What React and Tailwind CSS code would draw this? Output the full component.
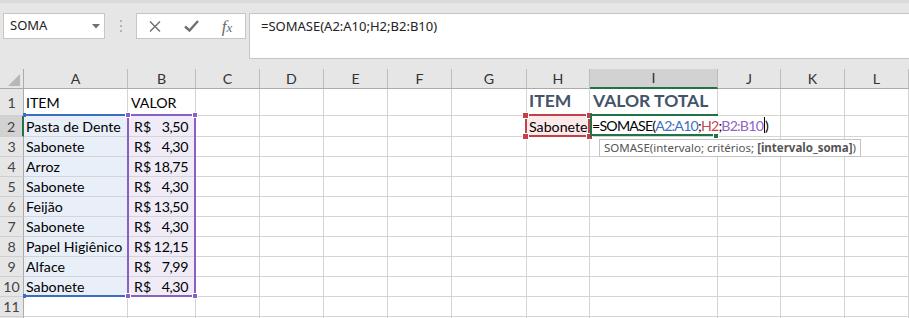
import React from "react";

const COLS = ["A", "B", "C", "D", "E", "F", "G", "H", "I", "J", "K", "L"];
const ITEMS = ["Pasta de Dente", "Sabonete", "Arroz", "Sabonete", "Feijão", "Sabonete", "Papel Higiênico", "Alface", "Sabonete"];
const VALUES = ["3,50", "4,30", "18,75", "4,30", "13,50", "4,30", "12,15", "7,99", "4,30"];
const ROWS = [1, 2, 3, 4, 5, 6, 7, 8, 9, 10, 11, 12];

function Toolbar() {
  return (
    <div className="h-[69px] border-t-[3px] border-t-[#dadada] pt-[10px] flex items-start">
      <div className="ml-[3px] w-[102px] h-[26px] bg-white border border-[#c6c6c6] flex items-center justify-between pl-[6px] pr-[4px] font-['Noto_Sans',sans-serif] text-[13px] text-[#222]">
        <span>SOMA</span>
        <svg width="8" height="5" viewBox="0 0 8 5">
          <polygon points="0,0 8,0 4,4.5" fill="#707070" />
        </svg>
      </div>
      <div className="w-[31px] h-[26px] flex flex-col items-center justify-center gap-[3px]">
        <div className="w-[2px] h-[2px] bg-[#b3b3b3]" />
        <div className="w-[2px] h-[2px] bg-[#b3b3b3]" />
        <div className="w-[2px] h-[2px] bg-[#b3b3b3]" />
      </div>
      <div className="w-[110px] h-[26px] bg-white border border-[#c6c6c6] flex">
        <div className="w-[36px] h-full flex items-center justify-center">
          <svg width="12" height="11" viewBox="0 0 12 11">
            <path d="M1 0.5 L11 10.5 M11 0.5 L1 10.5" stroke="#6e6e6e" strokeWidth="1.4" fill="none" />
          </svg>
        </div>
        <div className="w-[36px] h-full flex items-center justify-center">
          <svg width="15" height="12" viewBox="0 0 15 12">
            <path d="M1 6.5 L5.5 10.5 L14 1" stroke="#707070" strokeWidth="2.4" fill="none" />
          </svg>
        </div>
        <div className="w-[36px] h-full flex items-center justify-center font-['Liberation_Serif',serif] italic text-[#6a6a6a] text-[17px] leading-none">
          <span>f</span>
          <span className="text-[13px] mt-[3px]">x</span>
        </div>
      </div>
      <div className="ml-[3px] flex-1 h-[46px] bg-white border border-r-0 border-[#c6c6c6] pl-[11px] pt-[3px] font-['Noto_Sans',sans-serif] text-[13px] leading-[18px] text-[#222]">
        =SOMASE(A2:A10;H2;B2:B10)
      </div>
    </div>
  );
}

const HEAD = "text-[17.5px] leading-[20px] font-bold text-[#44546a]";

function cellContent(r, c) {
  const base = "border-r border-b border-[#d4d4d4] flex items-end whitespace-nowrap text-[14.2px] leading-[17px]";
  const pb = r === 1 ? " pb-[4px]" : " pb-[1px]";
  if (r === 1) {
    if (c === 0) return { cls: base + pb + " pl-[2px] bg-white", content: "ITEM" };
    if (c === 1) return { cls: base + pb + " pl-[3px] bg-white", content: "VALOR" };
    if (c === 7) return { cls: base + pb + " pl-[2px] bg-white", content: <span className={HEAD}>ITEM</span> };
    if (c === 8) return { cls: base + pb + " pl-[3px] bg-white", content: <span className={HEAD}>VALOR TOTAL</span> };
  }
  if (r >= 2 && r <= 10) {
    if (c === 0) return { cls: base + pb + " pl-[2px] bg-[#e9eff8]", content: ITEMS[r - 2] };
    if (c === 1)
      return {
        cls: base + pb + " pl-[6px] pr-[7px] justify-between bg-[#f0ecf7]",
        content: (
          <>
            <span>R$</span>
            <span className="tracking-[-0.4px]">{VALUES[r - 2]}</span>
          </>
        ),
      };
  }
  if (r === 2 && c === 7) return { cls: base + pb + " pl-[2px] bg-[#fce9ea]", content: "Sabonete" };
  return { cls: base + pb + " bg-white", content: null };
}

function Sheet() {
  return (
    <div className="grid grid-cols-[24px_104px_68px_64px_64px_64px_64px_75px_63px_128px_63px_64px_64px] grid-rows-[20px_27px_21px_20px_20px_20px_20px_20px_20px_20px_20px_20px_20px] font-['Lato','Liberation_Sans',sans-serif] text-black">
      <div className="border-r border-b border-r-[#ababab] border-b-[#ababab] bg-[#e6e6e6] relative">
        <svg className="absolute left-[7px] top-[5px]" width="14" height="13" viewBox="0 0 14 13">
          <polygon points="13,0 13,12 1,12" fill="#b7b7b7" />
        </svg>
      </div>
      {COLS.map((l, i) =>
        i === 8 ? (
          <div
            key={l}
            className="border-r border-b-2 border-r-[#bdbdbd] border-b-[#217346] bg-[#d2d2d2] flex items-center justify-center text-[14.2px] text-[#333]"
          >
            {l}
          </div>
        ) : (
          <div
            key={l}
            className="border-r border-b border-r-[#bdbdbd] border-b-[#ababab] bg-[#e6e6e6] flex items-center justify-center text-[14.2px] text-[#333]"
          >
            {l}
          </div>
        )
      )}
      {ROWS.map((r) => (
        <React.Fragment key={r}>
          {r === 2 ? (
            <div className="border-r-2 border-b border-r-[#217346] border-b-[#cfcfcf] bg-[#d2d2d2] flex items-end justify-center pb-[1px] text-[14.2px] leading-[17px] text-[#444]">
              {r}
            </div>
          ) : (
            <div
              className={
                "border-r border-b border-r-[#ababab] border-b-[#cfcfcf] bg-[#e6e6e6] flex items-end justify-center text-[14.2px] leading-[17px] text-[#444] " +
                (r === 1 ? "pb-[4px]" : "pb-[1px]")
              }
            >
              {r <= 11 ? r : null}
            </div>
          )}
          {COLS.map((l, c) => {
            const { cls, content } = cellContent(r, c);
            return (
              <div key={l + r} className={cls}>
                {content}
              </div>
            );
          })}
        </React.Fragment>
      ))}
    </div>
  );
}

function Overlays() {
  return (
    <>
      {/* A2:A10 blue range */}
      <div className="absolute left-[24px] top-[114px] w-[103px] h-[2px] bg-[#3b6dc1]" />
      <div className="absolute left-[24px] top-[295px] w-[103px] h-[2px] bg-[#3b6dc1]" />
      <div className="absolute left-[23px] top-[113px] w-[3px] h-[4px] bg-[#3b6dc1]" />
      <div className="absolute left-[23px] top-[294px] w-[3px] h-[4px] bg-[#3b6dc1]" />

      {/* B2:B10 purple range */}
      <div className="absolute left-[127px] top-[114px] w-[69px] h-[183px] border-2 border-[#8a60c2]" />
      <div className="absolute left-[125px] top-[112px] w-[6px] h-[6px] bg-[#8a60c2] border border-white" />
      <div className="absolute left-[192px] top-[112px] w-[6px] h-[6px] bg-[#8a60c2] border border-white" />
      <div className="absolute left-[125px] top-[293px] w-[6px] h-[6px] bg-[#8a60c2] border border-white" />
      <div className="absolute left-[192px] top-[293px] w-[6px] h-[6px] bg-[#8a60c2] border border-white" />

      {/* H2 red range */}
      <div className="absolute left-[525px] top-[114px] w-[65px] h-[23px] border-2 border-[#c1404a]" />
      <div className="absolute left-[522px] top-[112px] w-[7px] h-[7px] bg-[#c1404a] border border-white" />
      <div className="absolute left-[586px] top-[112px] w-[7px] h-[7px] bg-[#c1404a] border border-white" />
      <div className="absolute left-[522px] top-[133px] w-[7px] h-[7px] bg-[#c1404a] border border-white" />
      <div className="absolute left-[586px] top-[133px] w-[7px] h-[7px] bg-[#c1404a] border border-white" />

      {/* I2 active cell in edit mode */}
      <div className="absolute left-[592px] top-[116px] h-[18px] bg-white flex items-end pr-[3px] whitespace-nowrap font-['Lato','Liberation_Sans',sans-serif] text-[14.2px] leading-[17px] tracking-[-0.8px] text-black">
        <span>=SOMASE(</span>
        <span className="text-[#3d6ec3]">A2:A10</span>
        <span>;</span>
        <span className="text-[#c9434d]">H2</span>
        <span>;</span>
        <span className="text-[#9063c4]">B2:B10</span>
        <span className="inline-block w-[1px] h-[16px] bg-black mb-[1px] ml-[1px]" />
        <span>)</span>
      </div>
      <div className="absolute left-[590px] top-[114px] w-[2px] h-[23px] bg-[#217346]" />
      <div className="absolute left-[590px] top-[114px] w-[128px] h-[2px] bg-[#217346]" />
      <div className="absolute left-[590px] top-[134px] w-[123px] h-[2px] bg-[#217346]" />
      <div className="absolute left-[713px] top-[133px] w-[6px] h-[6px] bg-[#217346] border border-white" />

      {/* Tooltip */}
      <div className="absolute left-[599px] top-[139px] h-[18px] bg-white border border-[#c3c3c3] px-[4px] whitespace-nowrap font-['Noto_Sans',sans-serif] text-[11.5px] leading-[16px] text-[#555]">
        SOMASE(intervalo; critérios; <span className="font-bold">[intervalo_soma]</span>)
      </div>
    </>
  );
}

export default function App() {
  return (
    <div className="relative w-[909px] h-[318px] overflow-hidden bg-[#e6e6e6]">
      <Toolbar />
      <Sheet />
      <Overlays />
    </div>
  );
}
